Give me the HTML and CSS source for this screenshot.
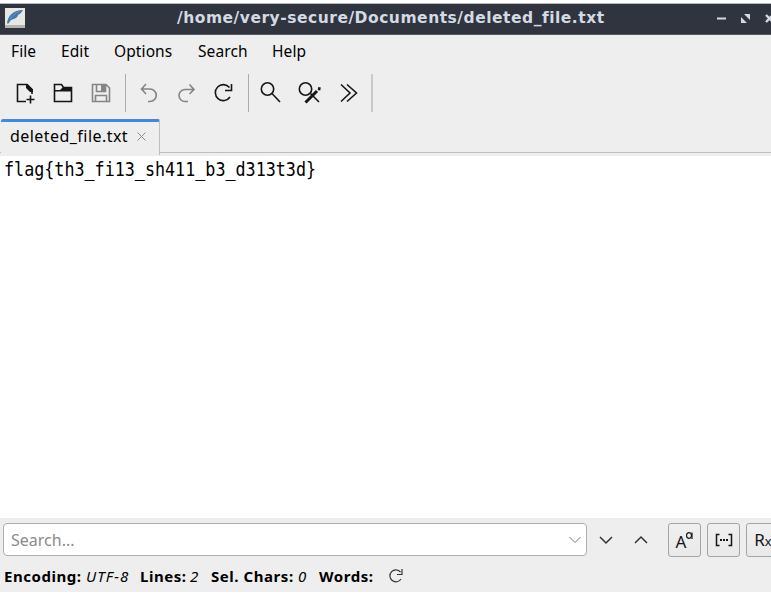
FILE: index.html
```
<!DOCTYPE html>
<html lang="en">
<head>
<meta charset="utf-8">
<title>deleted_file.txt</title>
<link rel="stylesheet" href="styles.css">
</head>
<body>
<div class="window">
  <header class="titlebar">
    <svg class="app-icon" width="20" height="20" viewBox="0 0 20 20"><path fill="#e7e7e4" d="M0 0h20v20H0z"/><path fill="#b4b4b0" d="M0 17h20v3H0z"/><path fill="#4678ad" d="M2 15C3 8 8 2 18 2c-2 3-3 4-5 5 0 2-3 4-7 5l-3 4z"/><path d="M5 11C8 7 10 5 14 3.500" stroke="#6c96c2" fill="none"/></svg>
    <h1 class="title">/home/very-secure/Documents/deleted_file.txt</h1>
    <div class="controls">
      <svg width="9" height="9" viewBox="0 0 9 9"><path fill="#d3dae3" d="M0 3.5h9v2H0z"/></svg>
      <svg width="9" height="9" viewBox="0 0 9 9"><path fill="#d3dae3" d="M3 0h6v6zM0 3v6h6z"/></svg>
      <svg width="9" height="9" viewBox="0 0 9 9"><path stroke="#d3dae3" stroke-width="2.4" d="M1 1l7 7M8 1L1 8"/></svg>
    </div>
  </header>
  <nav class="menubar">
    <span class="m-file">File</span><span class="m-edit">Edit</span><span class="m-options">Options</span><span class="m-search">Search</span><span class="m-help">Help</span>
  </nav>
  <div class="toolbar">
    <div class="group files">
      <svg viewBox="0 0 24 24"><path d="M13 20.500H4.500v-17H14l5 5V13"/><path class="solid" d="M13 3h1.500L20 8.500V11h-3l-4-4z"/><path d="M17.500 14.500v8M13.500 18.500h8"/></svg>
      <svg viewBox="0 0 24 24"><path d="M3.500 3.500h7l2 3h8v14h-17z"/><path class="solid" d="M3 10.500h18V6h-9l-3 3H3z"/></svg>
      <svg class="dim" viewBox="0 0 24 24"><path d="M3.500 3.500h13.500l3.500 3.500v13.500h-17zM7.500 4v6.500h9V4M6.500 20.500v-6h11v6"/><path class="solid" d="M12 4h4v6h-4z"/></svg>
    </div>
    <i class="sep"></i>
    <div class="group history">
      <svg class="dim" viewBox="0 0 24 24"><path d="M9 3L4.500 8l4.500 5M4.500 8H13a6 6 0 010 12.500h-2"/></svg>
      <svg class="dim" viewBox="0 0 24 24"><path d="M15.500 3.500L20 8.500l-4.500 4.500M20 8.500H11a6 6 0 000 12h3"/></svg>
      <svg viewBox="0 0 24 24"><path d="M18.500 6.500A8 8 0 1019 16M20.500 3v6.500H14"/></svg>
    </div>
    <i class="sep"></i>
    <div class="group find">
      <svg viewBox="0 0 24 24"><circle cx="9.500" cy="8" r="6.200"/><path d="M14 12.500l8 8.500"/></svg>
      <svg viewBox="0 0 24 24"><circle cx="8.500" cy="8" r="6.200"/><path d="M13.500 12.500l8.500 8.500"/><path class="bold" d="M8.500 21.500L20 10"/><path class="bold" d="M21 7.500l2.500.5"/></svg>
      <svg viewBox="0 0 24 24"><path d="M5 3.500l9 8.500-9 8.500M11 3.500l9.500 8.500-9.500 8.500"/></svg>
    </div>
    <i class="sep end"></i>
  </div>
  <div class="tabs">
    <div class="tab"><span class="tab-name">deleted_file.txt</span><svg width="9" height="9" viewBox="0 0 9 9"><path d="M.5.5l8 8M8.500.5l-8 8"/></svg></div>
  </div>
  <main class="editor"><div class="line">flag{th3_fi13_sh411_b3_d313t3d}</div></main>
  <footer class="bottom">
    <div class="searchbar">
      <div class="field"><span class="placeholder">Search...</span><svg width="12" height="8" viewBox="0 0 12 8"><path d="M.5 1L6 6.500 11.500 1"/></svg></div>
      <svg class="arrow" viewBox="0 0 14 10"><path d="M1 2l6 6 6-6"/></svg>
      <svg class="arrow up" viewBox="0 0 14 10"><path d="M1 8l6-6 6 6"/></svg>
      <button class="toggle"><span class="case">A</span><svg class="sup" width="7" height="8" viewBox="0 0 7 8"><ellipse cx="3" cy="3.500" rx="2.500" ry="2.800"/><path d="M6 .5V7"/></svg></button>
      <button class="toggle"><svg width="18" height="14" viewBox="0 0 18 14"><path d="M4.500 1.500H1.500v11h3M13.500 1.500h3v11h-3"/><path class="dots" d="M5 6h2v2H5zM8 6h2v2H8zM11 6h2v2h-2z"/></svg></button>
      <button class="toggle"><span class="regex">R<small>x</small></span></button>
    </div>
    <div class="status"><b class="s-enc">Encoding:</b><em class="v-enc">UTF-8</em><b class="s-lines">Lines:</b><em class="v-lines">2</em><b class="s-chars">Sel. Chars:</b><em class="v-chars">0</em><b class="s-words">Words:</b><svg width="14" height="14" viewBox="0 0 14 14"><path d="M11.500 3A6 6 0 1012 10M13 0v5.500H8"/></svg></div>
  </footer>
</div>
</body>
</html>
```
FILE: styles.css
```
* { box-sizing: border-box; }
body { margin: 0; background: #fff; overflow: hidden; font-family: "Noto Sans", sans-serif; font-size: 16px; color: #000; }
svg { display: block; flex: none; fill: none; }
.window { width: 771px; height: 592px; padding-top: 3px; display: flex; flex-direction: column; overflow: hidden; }
.titlebar { height: 32px; flex: none; display: flex; align-items: center; background: #2f343f; border-top: 1px solid #b7bac0; border-bottom: 1px solid #555a65; padding-left: 5px; }
.app-icon { margin-top: -2px; }
.title { margin: -3px 0 0 152px; width: 540px; flex: none; font: bold 15.5px/28px "DejaVu Sans", sans-serif; letter-spacing: .52px; color: #d3dae3; white-space: nowrap; }
.controls { display: flex; gap: 15px; flex: none; margin: -1px 0 0 0; }
.menubar { height: 35px; flex: none; background: #eee; display: flex; padding-left: 11px; line-height: 33px; font-size: 15.5px; letter-spacing: .1px; white-space: nowrap; }
.m-file { width: 50px; }
.m-edit { width: 53px; }
.m-options { width: 84px; }
.m-search { width: 74px; }
.toolbar { height: 49px; flex: none; background: #eee; display: flex; align-items: flex-start; padding: 4px 0 0 6px; }
.group { display: grid; height: 38px; align-items: center; justify-items: center; }
.group svg { width: 24px; height: 24px; stroke: #161616; stroke-width: 1.6; }
.files { grid-template-columns: repeat(3, 38px); }
.history { grid-template-columns: repeat(3, 37px); margin-left: -1px; }
.find { grid-template-columns: repeat(3, 39px); margin-left: -1px; }
.group .dim { stroke: #858585; }
.group .solid { fill: #161616; stroke: none; }
.group .dim .solid { fill: #858585; }
.bold { stroke-width: 3; }
.sep { width: 1px; height: 38px; background: #a9acb0; margin: 0 5px; }
.history + .sep { margin: 0 2px 0 7px; }
.sep.end { width: 2px; background: #c9c9c9; margin: 0 0 0 4px; }
.tabs { height: 37px; flex: none; background: #eee; display: flex; padding-left: 1px; box-shadow: inset 0 -3px #eee, inset 0 -4px #bebebe; }
.tab { width: 159px; height: 36px; background: #eee; border-top: 3px solid #3f8ade; border-right: 1px solid #bebebe; border-radius: 2px 2px 0 0; display: flex; align-items: center; padding: 0 0 3px 9px; }
.tab-name { width: 127px; line-height: 30px; font-size: 16px; letter-spacing: .45px; margin-top: -2px; white-space: nowrap; }
.tab svg { stroke: #888; margin-top: -1px; }
.editor { flex: 1; background: #fff; padding: 2px 4px; }
.line { font: 16.730px/22px "DejaVu Sans Mono", monospace; white-space: pre; transform: scaleY(1.12); }
.bottom { height: 74px; flex: none; background: #eee; padding: 5px 0 0 3px; }
.searchbar { display: flex; height: 34px; align-items: center; }
.field { width: 584px; height: 33px; flex: none; background: #fff; border: 1px solid #aeaeae; border-radius: 4px; display: flex; align-items: center; justify-content: space-between; margin-top: -1px; padding: 0 5px 0 7px; color: #8a8a8a; }
.field svg { stroke: #777; }
.arrow { width: 14px; height: 10px; flex: none; stroke: #333; stroke-width: 1.5; margin-left: 12px; }
.arrow.up { margin: 0 20px 0 21px; }
.toggle { width: 33px; height: 34px; flex: none; margin-right: 6px; padding: 0; border: 1px solid #a4a4a4; border-radius: 3px; background: linear-gradient(#f0f0f0, #e9e9e9); display: flex; align-items: center; justify-content: center; font: 17px/30px "Noto Sans", sans-serif; color: #161616; }
.toggle svg { stroke: #161616; stroke-width: 1.5; }
.toggle .dots { fill: #161616; stroke: none; }
.case { padding-top: 3px; }
.toggle .sup { margin: -9px 0 0; stroke-width: 1.2; }
.regex { padding-left: 1px; }
.regex small { font-size: 13px; }
.status { display: flex; align-items: center; height: 34px; padding: 3px 0 0 1px; line-height: 20px; font-size: 15px; letter-spacing: .55px; white-space: nowrap; }
.s-enc { width: 82px; }
.v-enc { width: 54px; letter-spacing: 1.1px; }
.s-lines { width: 50px; }
.v-lines { width: 21px; }
.s-chars { width: 87px; }
.v-chars { width: 21px; }
.s-words { width: 70px; }
.status svg { stroke: #333; stroke-width: 1.2; }
```
